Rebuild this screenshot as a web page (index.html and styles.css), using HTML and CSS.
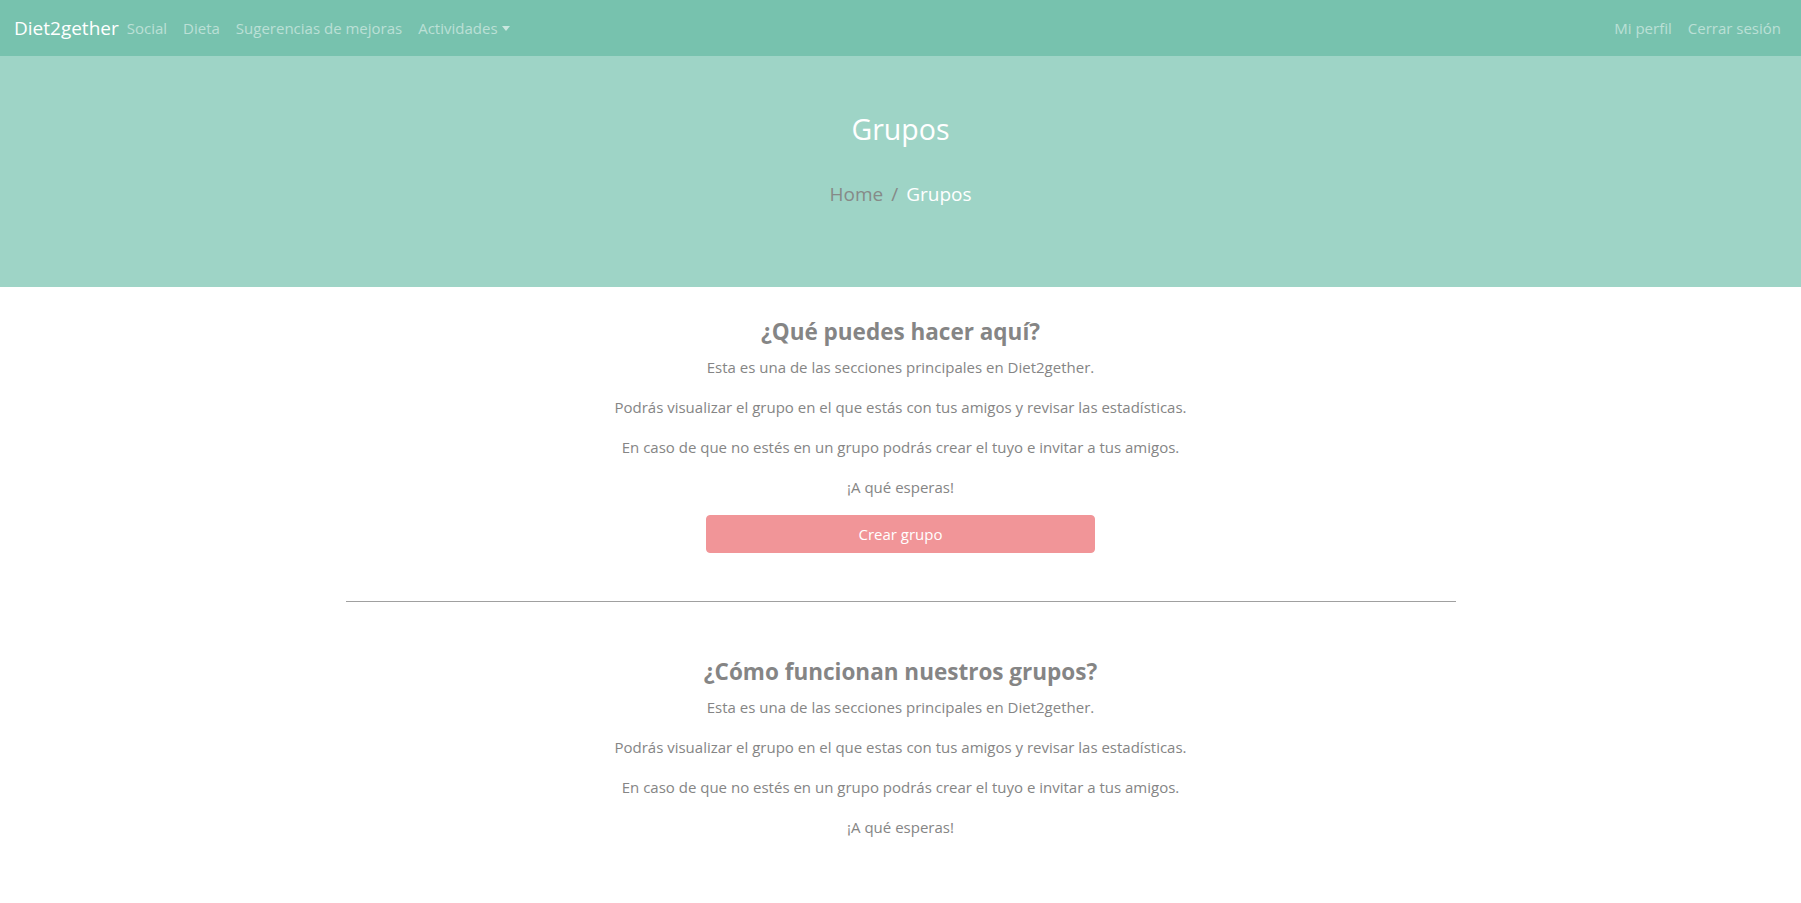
FILE: index.html
```html
<!DOCTYPE html>
<html lang="es">
<head>
<meta charset="utf-8">
<title>Grupos - Diet2gether</title>
<link rel="stylesheet" href="styles.css">
</head>
<body>
<nav class="navbar">
  <div class="nav-left">
    <a class="brand" href="#">Diet2gether</a>
    <a class="nav-link" href="#">Social</a>
    <a class="nav-link" href="#">Dieta</a>
    <a class="nav-link" href="#">Sugerencias de mejoras</a>
    <a class="nav-link dropdown" href="#">Actividades<span class="caret"></span></a>
  </div>
  <div class="nav-right">
    <a class="nav-link" href="#">Mi perfil</a>
    <a class="nav-link" href="#">Cerrar sesión</a>
  </div>
</nav>
<header class="hero">
  <h1 class="hero-title">Grupos</h1>
  <ol class="breadcrumb">
    <li class="crumb"><a href="#">Home</a></li>
    <li class="sep">/</li>
    <li class="crumb active">Grupos</li>
  </ol>
</header>
<main class="container">
  <section class="block first">
    <h2 class="block-title">¿Qué puedes hacer aquí?</h2>
    <p>Esta es una de las secciones principales en Diet2gether.</p>
    <p>Podrás visualizar el grupo en el que estás con tus amigos y revisar las estadísticas.</p>
    <p>En caso de que no estés en un grupo podrás crear el tuyo e invitar a tus amigos.</p>
    <p>¡A qué esperas!</p>
    <button class="btn-create">Crear grupo</button>
  </section>
  <hr class="divider">
  <section class="block second">
    <h2 class="block-title">¿Cómo funcionan nuestros grupos?</h2>
    <p>Esta es una de las secciones principales en Diet2gether.</p>
    <p>Podrás visualizar el grupo en el que estas con tus amigos y revisar las estadísticas.</p>
    <p>En caso de que no estés en un grupo podrás crear el tuyo e invitar a tus amigos.</p>
    <p>¡A qué esperas!</p>
  </section>
</main>
</body>
</html>
```
FILE: styles.css
```css
* { box-sizing: border-box; }
html, body { margin: 0; padding: 0; }
body {
  font-family: "Segoe UI", "Open Sans", "Noto Sans", sans-serif;
  font-size: 15px;
  line-height: 24px;
  color: #858585;
  background: #fff;
}
a { text-decoration: none; }

.navbar {
  height: 56px;
  background: #77c2ae;
  display: flex;
  align-items: center;
  justify-content: space-between;
  padding: 0 12px 0 14px;
}
.nav-left, .nav-right { display: flex; align-items: center; }
.brand {
  color: #fff;
  font-size: 19px;
  line-height: 30px;
  margin-right: 0;
}
.nav-link {
  color: rgba(255,255,255,0.5);
  padding: 8px;
  line-height: 24px;
}
.caret {
  display: inline-block;
  margin-left: 4px;
  vertical-align: 3px;
  border-top: 5px solid rgba(255,255,255,0.6);
  border-left: 4.5px solid transparent;
  border-right: 4.5px solid transparent;
}

.hero {
  background: #9ed4c6;
  height: 231px;
  padding-top: 54px;
  display: flex;
  flex-direction: column;
  align-items: center;
}
.hero-title {
  margin: 0;
  font-size: 28.5px;
  font-weight: 400;
  line-height: 38px;
  color: #fff;
}
.breadcrumb {
  list-style: none;
  margin: 31px 0 0;
  padding: 0;
  display: flex;
  gap: 8px;
  font-size: 19px;
  line-height: 30px;
}
.crumb a, .sep { color: #868a88; }
.crumb.active { color: #fff; }

.container {
  width: 1110px;
  margin: 0 auto;
}
.block {
  display: flex;
  flex-direction: column;
  align-items: center;
  text-align: center;
}
.block.first { padding-top: 30px; }
.block.second { padding-top: 55px; }
.block-title {
  margin: 0 0 9px;
  font-size: 22.5px;
  font-weight: 700;
  line-height: 29px;
  color: #858585;
}
.block p { margin: 0 0 16px; }
.btn-create {
  width: 389px;
  height: 38px;
  border: 1px solid #f19598;
  border-radius: 4px;
  background: #f19598;
  color: #fff;
  font-family: inherit;
  font-size: 15px;
  padding: 0;
}
.divider {
  margin: 48px 0 0;
  border: 0;
  border-top: 1px solid #a0a0a0;
}
```
